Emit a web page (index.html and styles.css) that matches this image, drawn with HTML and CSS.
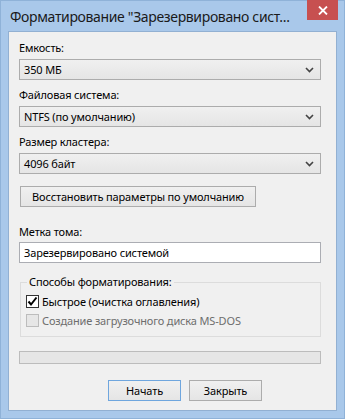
FILE: index.html
```html
<!DOCTYPE html>
<html>
<head>
    <meta charset="utf-8">
    <title>Форматирование</title>
    <link rel="stylesheet" href="styles.css">
</head>
<body>
    <div class="window">
        <div class="titlebar">
            <div class="title">Форматирование "Зарезервировано сист...</div>
            <div class="close-btn">
                <svg width="10" height="9" viewBox="0 0 10 9"><path d="M1 0.5 L9 8.5 M9 0.5 L1 8.5" stroke="#fff" stroke-width="1.8"/></svg>
            </div>
        </div>

        <div class="client">
            <div class="field">
                <div class="label">Емкость:</div>
                <div class="combo">
                    <span>350 МБ</span>
                    <svg class="chevron" width="9" height="6" viewBox="0 0 9 6"><path d="M1 1 L4.5 4.5 L8 1" fill="none" stroke="#444" stroke-width="1.6"/></svg>
                </div>
            </div>

            <div class="field">
                <div class="label">Файловая система:</div>
                <div class="combo">
                    <span>NTFS (по умолчанию)</span>
                    <svg class="chevron" width="9" height="6" viewBox="0 0 9 6"><path d="M1 1 L4.5 4.5 L8 1" fill="none" stroke="#444" stroke-width="1.6"/></svg>
                </div>
            </div>

            <div class="field">
                <div class="label">Размер кластера:</div>
                <div class="combo">
                    <span>4096 байт</span>
                    <svg class="chevron" width="9" height="6" viewBox="0 0 9 6"><path d="M1 1 L4.5 4.5 L8 1" fill="none" stroke="#444" stroke-width="1.6"/></svg>
                </div>
            </div>

            <button class="btn btn-restore">Восстановить параметры по умолчанию</button>

            <div class="field field-label">
                <div class="label">Метка тома:</div>
                <div class="textbox">Зарезервировано системой</div>
            </div>

            <fieldset class="group">
                <legend>Способы форматирования:</legend>
                <div class="check-row">
                    <span class="checkbox checked">
                        <svg width="11" height="11" viewBox="0 0 11 11"><path d="M1.5 5.5 L4 8.5 L9.5 1.5" fill="none" stroke="#000" stroke-width="2"/></svg>
                    </span>
                    <span>Быстрое (очистка оглавления)</span>
                </div>
                <div class="check-row disabled">
                    <span class="checkbox"></span>
                    <span>Создание загрузочного диска MS-DOS</span>
                </div>
            </fieldset>

            <div class="progress"></div>

            <div class="actions">
                <button class="btn btn-default">Начать</button>
                <button class="btn">Закрыть</button>
            </div>
        </div>
    </div>
</body>
</html>
```

FILE: styles.css
```css
html, body {
    margin: 0;
    padding: 0;
}
body {
    font-family: "Noto Sans", "Open Sans", sans-serif;
    font-size: 11px;
    letter-spacing: -0.15px;
    color: #000;
    background: #a9c8ea;
}
.window {
    width: 345px;
    height: 419px;
    box-sizing: border-box;
    background: #a9c8ea;
    border: 1px solid #8fb2d8;
    display: flex;
    flex-direction: column;
}
.titlebar {
    height: 30px;
    display: flex;
    justify-content: space-between;
    align-items: flex-start;
}
.title {
    font-size: 14px;
    letter-spacing: -0.35px;
    line-height: 20px;
    margin: 6px 0 0 9px;
    color: #1a1a1a;
    white-space: nowrap;
}
.close-btn {
    flex-shrink: 0;
    width: 31px;
    height: 20px;
    margin: -1px 6px 0 4px;
    background: #c75050;
    display: flex;
    align-items: center;
    justify-content: center;
}
.client {
    margin: 0 7px;
    height: 380px;
    box-sizing: border-box;
    background: #f0f0f0;
    border: 1px solid #92b0d2;
    padding: 8px 0 0 10px;
    display: flex;
    flex-direction: column;
}
.field {
    margin-bottom: 7px;
}
.label {
    line-height: 15px;
    margin-bottom: 4px;
}
.combo {
    width: 302px;
    height: 21px;
    box-sizing: border-box;
    border: 1px solid #acacac;
    background: linear-gradient(#f0f0f0, #e5e5e5);
    display: flex;
    align-items: center;
    justify-content: space-between;
    padding: 0 6px 0 4px;
}
.chevron {
    display: block;
}
.btn {
    font-family: inherit;
    font-size: 11px;
    letter-spacing: -0.15px;
    color: #000;
    height: 21px;
    box-sizing: border-box;
    border: 1px solid #acacac;
    background: linear-gradient(#f0f0f0, #e5e5e5);
    padding: 0;
    line-height: 18px;
    white-space: nowrap;
}
.btn-restore {
    width: 236px;
    margin: 5px 0 0 1px;
}
.field-label {
    margin-top: 17px;
    margin-bottom: 0;
}
.field-label .label {
    margin-bottom: 3px;
}
.textbox {
    width: 302px;
    height: 21px;
    box-sizing: border-box;
    border: 1px solid #abadb3;
    background: #fff;
    line-height: 19px;
    padding-left: 4px;
}
.group {
    width: 301px;
    box-sizing: border-box;
    margin: 11px 0 0 1px;
    padding: 2px 0 6px 5px;
    border: 1px solid #dcdcdc;
    min-width: 0;
}
.group legend {
    padding: 0 2px;
    margin-left: 1px;
    line-height: 16px;
}
.check-row {
    height: 19px;
    display: flex;
    align-items: center;
}
.checkbox {
    width: 13px;
    height: 13px;
    box-sizing: border-box;
    border: 1px solid #333;
    background: #fff;
    margin-right: 3px;
    display: flex;
    align-items: center;
    justify-content: center;
}
.disabled {
    color: #6d6d6d;
}
.disabled .checkbox {
    border-color: #bcbcbc;
    background: #e6e6e6;
}
.progress {
    width: 302px;
    height: 13px;
    box-sizing: border-box;
    margin-top: 14px;
    border: 1px solid #bcbcbc;
    background: #e6e6e6;
}
.actions {
    display: flex;
    gap: 8px;
    margin: 16px 0 0 89px;
}
.actions .btn {
    width: 73px;
}
.btn-default {
    border-color: #6fa6de;
}
```
